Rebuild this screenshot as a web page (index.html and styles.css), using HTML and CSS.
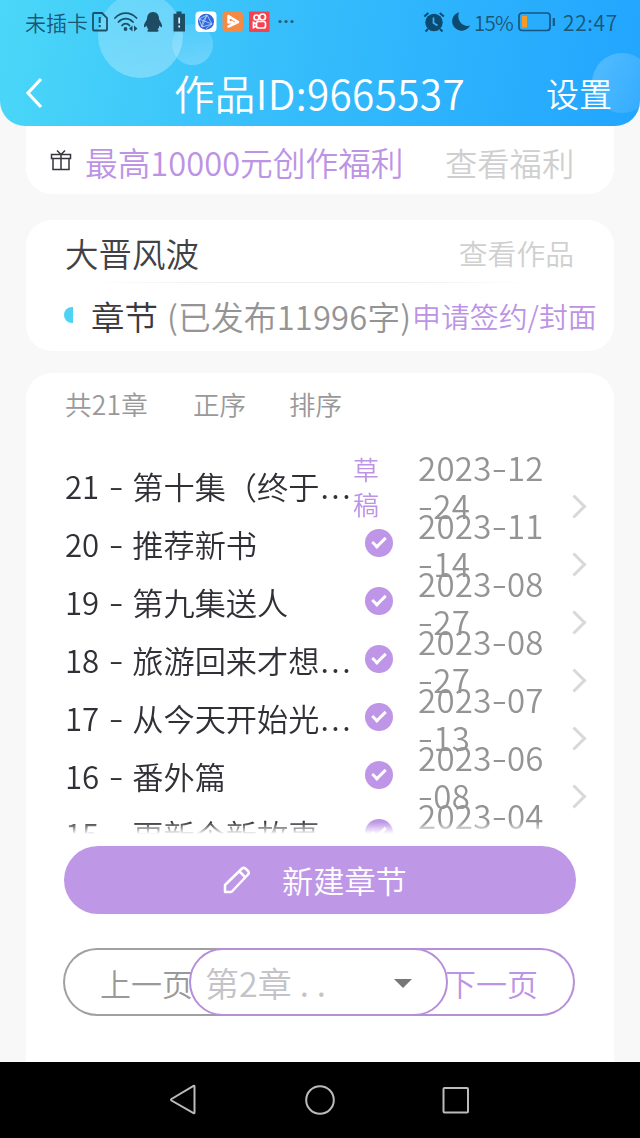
FILE: index.html
```html
<!DOCTYPE html>
<html lang="zh-CN">
<head>
<meta charset="utf-8">
<title>作品管理</title>
<link rel="stylesheet" href="styles.css">
</head>
<body>
<header class="header">
  <i class="bubble bubble-large"></i><i class="bubble bubble-small"></i><i class="bubble bubble-right"></i>
  <div class="status">
    <span class="carrier">未插卡</span>
    <svg class="status-left" width="206" height="30" viewBox="90 7 206 30">
      <g fill="none" stroke="#1d5068" stroke-width="1.8">
        <path d="M94 13h8l5 5v11.500a1 1 0 0 1-1 1H94a1 1 0 0 1-1-1V14a1 1 0 0 1 1-1z"/>
        <path d="M99.700 17v6M99.700 25v2.200" stroke-width="2"/>
        <path d="M115 18c6-6.500 15.500-6.500 21.500 0M118.500 22c4-4.500 10.500-4.500 14.500 0M122 25.500c2-2.500 5.500-2.500 7.500 0" stroke-linecap="round"/>
      </g>
      <circle cx="125.500" cy="29" r="1.900" fill="#1d5068"/>
      <path d="M132.500 25.500v6l-3.500-3zM134 25.500v6l3.500-3z" fill="#1d5068"/>
      <path d="M153 12c-4 0-6 3-6 7-1 2.500-3.500 5-3 8 .5 1 1.800-.5 2.500-1.500.2 1.500 1 3 2 4-2.500 2-1 2.500 4.500 2.300 5.500.2 7-.3 4.500-2.300 1-1 1.800-2.500 2-4 .7 1 2 2.500 2.500 1.500.5-3-2-5.500-3-8 0-4-2-7-6-7z" fill="#1d4c63"/>
      <path d="M176.500 11.500h5v2.300h3.500v17.700h-11.500V13.800h3z" fill="#1d4c63"/>
      <path d="M179.200 17.500v6M179.200 25.500v2" stroke="#d9f5ff" stroke-width="1.700"/>
      <rect x="195.500" y="11.500" width="21" height="20.500" rx="4" fill="#fff"/>
      <circle cx="206" cy="21.700" r="8" fill="#2f67dc"/>
      <path d="M199 19l8-4 5 9-10 3zM199 19l13 5M207 15l-5 12M207 15c-3 4-6 9-5 12M212 24c-3 2-5 4-6 5" fill="none" stroke="#bcd6ff" stroke-width=".8"/>
      <rect x="222.500" y="11.500" width="20.500" height="20.500" rx="4" fill="#f58a45"/>
      <path d="M228.500 16l9.500 6-9.500 4.500M228.500 16v6.500l4-.5" fill="none" stroke="#fff" stroke-width="2.500" stroke-linejoin="round" stroke-linecap="round"/>
      <rect x="249" y="11.500" width="20.500" height="20.500" rx="1" fill="#f4424f"/>
      <g fill="none" stroke="#fff" stroke-width="1.700"><circle cx="256.500" cy="17.500" r="2.500"/><circle cx="262.500" cy="17" r="3"/><rect x="256.500" y="21.500" width="9" height="6.500" rx="2"/><path d="M256.500 24l-3-1.500v5l3-1.500"/></g>
      <g fill="#275d79"><circle cx="280" cy="21.500" r="1.600"/><circle cx="286" cy="21.500" r="1.600"/><circle cx="292" cy="21.500" r="1.600"/></g>
    </svg>
    <svg class="status-right" width="48" height="30" viewBox="423 7 48 30">
      <circle cx="434" cy="22.500" r="8.700" fill="#0d4a70"/>
      <path d="M424.300 16.500l4-3.500M443.800 16.500l-4-3.500M428 29l-2.500 2.500M440 29l2.500 2.500" stroke="#0d4a70" stroke-width="2" />
      <path d="M433.500 17.500v5.500l4 2.500" fill="none" stroke="#35b4fb" stroke-width="1.700"/>
      <path d="M459 12.300a9.400 9.400 0 1 0 11 13.200c-7 2.500-14-5.500-11-13.200z" fill="#0d4a70"/>
    </svg>
    <span class="percent">15%</span>
    <svg class="battery" width="38" height="20" viewBox="0 0 38 20"><rect x="1" y="1" width="31" height="17.500" rx="3" fill="none" stroke="#155681" stroke-width="1.700"/><rect x="4" y="4" width="5" height="11.500" fill="#f39a28"/><path d="M35.800 6v8" stroke="#155681" stroke-width="2.200"/></svg>
    <time class="clock">22:47</time>
  </div>
  <nav class="titlebar">
    <svg class="back" width="20" height="32" viewBox="0 0 20 32"><path d="M17 2L4 16l13 14" fill="none" stroke="#fff" stroke-width="3.200"/></svg>
    <h1>作品ID:9665537</h1>
    <span class="settings">设置</span>
  </nav>
</header>
<main>
  <section class="card benefits">
    <svg width="22" height="24" viewBox="0 0 22 24" fill="none" stroke="#35353c" stroke-width="1.500"><path d="M1.500 6.500h19v4h-19zM3 10.500h16v11H3zM11 6.500v15M7 2.500l4 4 4-4"/></svg>
    <span class="offer">最高10000元创作福利</span>
    <span class="benefits-link">查看福利</span>
  </section>
  <section class="card work">
    <div class="work-head"><span class="work-name">大晋风波</span><span class="work-link">查看作品</span></div>
    <div class="divider"></div>
    <div class="work-info"><i class="half-dot"></i><b class="section-name">章节</b><span class="count">(已发布11996字)</span><span class="apply">申请签约/封面</span></div>
  </section>
  <section class="card chapters">
    <div class="sort"><span class="total">共21章</span><span class="order">正序</span><span>排序</span></div>
    <div class="list">
      <div class="row"><span class="name">21 <i class="dash">-</i> 第十集（终于<i class="dots">...</i></span><span class="draft">草<br>稿</span><span class="date">2023<i class="dash">-</i>12<br><i class="dash">-</i>24</span><i class="arrow"></i></div>
      <div class="row"><span class="name">20 <i class="dash">-</i> 推荐新书</span><i class="check"></i><span class="date">2023<i class="dash">-</i>11<br><i class="dash">-</i>14</span><i class="arrow"></i></div>
      <div class="row"><span class="name">19 <i class="dash">-</i> 第九集送人</span><i class="check"></i><span class="date">2023<i class="dash">-</i>08<br><i class="dash">-</i>27</span><i class="arrow"></i></div>
      <div class="row"><span class="name">18 <i class="dash">-</i> 旅游回来才想<i class="dots">...</i></span><i class="check"></i><span class="date">2023<i class="dash">-</i>08<br><i class="dash">-</i>27</span><i class="arrow"></i></div>
      <div class="row"><span class="name">17 <i class="dash">-</i> 从今天开始光<i class="dots">...</i></span><i class="check"></i><span class="date">2023<i class="dash">-</i>07<br><i class="dash">-</i>13</span><i class="arrow"></i></div>
      <div class="row"><span class="name">16 <i class="dash">-</i> 番外篇</span><i class="check"></i><span class="date">2023<i class="dash">-</i>06<br><i class="dash">-</i>08</span><i class="arrow"></i></div>
      <div class="row"><span class="name">15 <i class="dash">-</i> 更新个新故事</span><i class="check"></i><span class="date">2023<i class="dash">-</i>04</span></div>
    </div>
    <button class="create"><svg width="28" height="28" viewBox="0 0 28 28" fill="none" stroke="#fff" stroke-width="2.500" stroke-linejoin="round"><path d="M2 26v-7L19 2.500q2-1.500 4 .5l2 2q1.500 2 0 3.500L8.500 26zM16.500 5.500l5.500 5.500"/></svg><span>新建章节</span></button>
    <div class="pager">
      <button class="page previous">上一页</button>
      <button class="select"><span>第2章<i class="select-dots">..</i></span><i class="caret"></i></button>
      <button class="page next">下一页</button>
    </div>
  </section>
</main>
<footer class="system-nav">
  <svg width="28" height="32" viewBox="0 0 28 32"><path d="M25.500 2.500v26q0 1-1 .5L2.500 16.500q-1-.8 0-1.500L24.500 2q1-.5 1 .5z"/></svg>
  <svg width="32" height="32" viewBox="0 0 32 32"><circle cx="16" cy="16" r="13.800"/></svg>
  <svg width="28" height="28" viewBox="0 0 28 28"><rect x="1.500" y="2" width="24.500" height="24.500" rx="1"/></svg>
</footer>
</body>
</html>
```
FILE: styles.css
```css
*, *::after { box-sizing: border-box; }
body { margin: 0; width: 640px; height: 1138px; overflow: hidden; display: flex; flex-direction: column; background: #f8f8f8; font-family: "Noto Sans CJK SC", sans-serif; font-weight: 350; white-space: nowrap; }
i { font-style: normal; }
button { border: 0; margin: 0; padding: 0; background: none; font-family: inherit; font-weight: inherit; }
svg { display: block; flex: none; }
.header { position: relative; height: 126px; overflow: hidden; border-radius: 0 0 25px 25px; background: linear-gradient(100deg, #4bd7f8 0%, #36bdfb 45%, #21a5ff 100%); }
.bubble { position: absolute; border-radius: 50%; }
.bubble-large { left: 98px; top: -7px; width: 85px; height: 85px; background: linear-gradient(160deg, #ffffff30, #ffffff50); }
.bubble-small { left: 172px; top: 24px; width: 41px; height: 41px; background: linear-gradient(160deg, #ffffff10, #ffffff45); }
.bubble-right { left: 592px; top: 53px; width: 60px; height: 60px; background: linear-gradient(120deg, #ffffff38, #ffffff10); }
.status { position: relative; display: flex; align-items: center; height: 44px; padding-left: 25px; color: #1b5673; line-height: 42px; }
.carrier { width: 65px; font-size: 21px; }
.status-right { margin-left: 127px; }
.percent { width: 43px; margin-left: 3px; font-size: 20.500px; letter-spacing: -.7px; }
.battery { margin-left: 1px; }
.clock { margin-left: 7px; font-size: 21px; letter-spacing: .6px; }
.titlebar { position: relative; display: flex; align-items: center; height: 82px; padding: 0 0 0 24px; color: #fff; }
.back { margin-top: 15px; }
h1 { width: 372px; margin: 15px 0 0 130px; font-size: 40.500px; font-weight: inherit; line-height: 60px; letter-spacing: .35px; }
.settings { margin-top: 15px; font-size: 33px; }
main { width: 588px; height: 936px; margin: 0 26px; }
.card { background: #fff; border-radius: 26px; }
.benefits { height: 68px; border-radius: 0 0 26px 26px; display: flex; align-items: center; padding-left: 24px; color: #bd93e6; line-height: 64px; }
.offer { width: 360px; margin: 3px 0 0 13px; font-size: 32.700px; }
.benefits-link { margin-top: 3px; color: #cfcfcf; font-size: 32.300px; }
.work { height: 131px; margin-top: 26px; }
.work-head { display: flex; align-items: center; height: 62px; padding: 3px 40px 0 39px; justify-content: space-between; }
.work-name { color: #414146; font-size: 33.500px; }
.work-link { color: #d0d0d0; font-size: 28.800px; }
.divider { height: 1px; margin: 0 80px 0 60px; background: linear-gradient(90deg, #fff, #eee 30%, #eee 70%, #fff); }
.work-info { display: flex; align-items: center; height: 64px; padding-left: 38px; }
.half-dot { width: 9px; height: 16px; background: #4ed3f5; border-radius: 9px 0 0 9px; }
.section-name { width: 75px; margin-left: 18px; color: #39393f; font-size: 33.500px; font-weight: inherit; }
.count { width: 246px; padding-left: 1px; color: #949494; font-size: 32.700px; letter-spacing: .2px; }
.apply { color: #bd93e6; font-size: 28.900px; }
.chapters { height: 689px; margin-top: 22px; padding: 0 39px 0 38px; border-radius: 26px 26px 0 0; }
.sort { display: flex; height: 84px; color: #999; font-size: 26.500px; line-height: 61px; }
.total { width: 129px; padding-left: 1px; letter-spacing: .2px; }
.order { width: 96px; }
.list { height: 377px; margin-right: -30px; overflow: hidden; -webkit-mask-image: linear-gradient(#000 365px, transparent); mask-image: linear-gradient(#000 365px, transparent); }
.row { display: grid; grid-template-columns: 288px 65px 153px; grid-template-rows: 58px; align-items: center; height: 58px; position: relative; }
.name { padding-left: 1px; color: #303037; font-size: 31.200px; line-height: 58px; word-spacing: 2.500px; }
.dash { display: inline-block; font-family: Inter, sans-serif; line-height: 0; transform: scaleX(1.12); }
.dots { display: inline-block; letter-spacing: 2.500px; margin-left: 1px; line-height: 0; }
.draft { margin: -6px 0 -6px 1px; color: #bd93e6; font-size: 26px; line-height: 35px; }
.check { width: 28px; height: 28px; margin: -2px 0 0 13px; border-radius: 50%; background: #be95e7; display: grid; place-items: center; }
.check::after { content: ""; width: 14px; height: 8px; border-left: 3px solid #fff; border-bottom: 3px solid #fff; transform: translateY(-2px) rotate(-45deg); }
.date { height: 76px; margin: -9px 0; padding-left: 1px; color: #949494; font-size: 33px; line-height: 38px; letter-spacing: .3px; }
.arrow { position: absolute; left: 502px; top: 41px; width: 17px; height: 17px; border: solid #d8d8d8; border-width: 3px 3px 0 0; transform: rotate(45deg); }
.create { display: flex; align-items: center; width: 512px; height: 68px; margin-top: 12px; padding-left: 159px; border-radius: 34px; background: #be97e7; color: #fff; font-size: 31.200px; line-height: 68px; }
.create span { margin-left: 31px; }
.pager { display: flex; width: 512px; height: 68px; margin: 34px 0 0 -1px; }
.page { height: 68px; border: 2px solid #a0a0a0; font-size: 31px; line-height: 66px; background: #fff; }
.previous { width: 160px; padding-left: 35px; border-radius: 34px 0 0 34px; border-right: 0; text-align: left; color: #999; }
.select { position: relative; width: 259px; margin: 0 -34px; padding: 2px 34px 0 14px; display: flex; align-items: center; justify-content: space-between; border: 2px solid #b78fd9; border-radius: 34px; background: #fff; color: #c3c3c8; font-size: 34px; line-height: 62px; }
.select-dots { margin-left: 8px; letter-spacing: 8px; }
.caret { border: solid transparent; border-width: 9px 9px 0; border-top-color: #777; }
.next { width: 161px; padding-left: 31px; border-color: #b78fd9; border-left: 0; border-radius: 0 34px 34px 0; color: #bd93e6; text-align: left; }
.system-nav { height: 76px; display: flex; align-items: center; background: #000; padding-left: 169px; }
.system-nav svg { fill: none; stroke: #bbb; stroke-width: 2; }
.system-nav svg:nth-child(2) { margin-left: 107px; }
.system-nav svg:nth-child(3) { margin-left: 106px; }
```
